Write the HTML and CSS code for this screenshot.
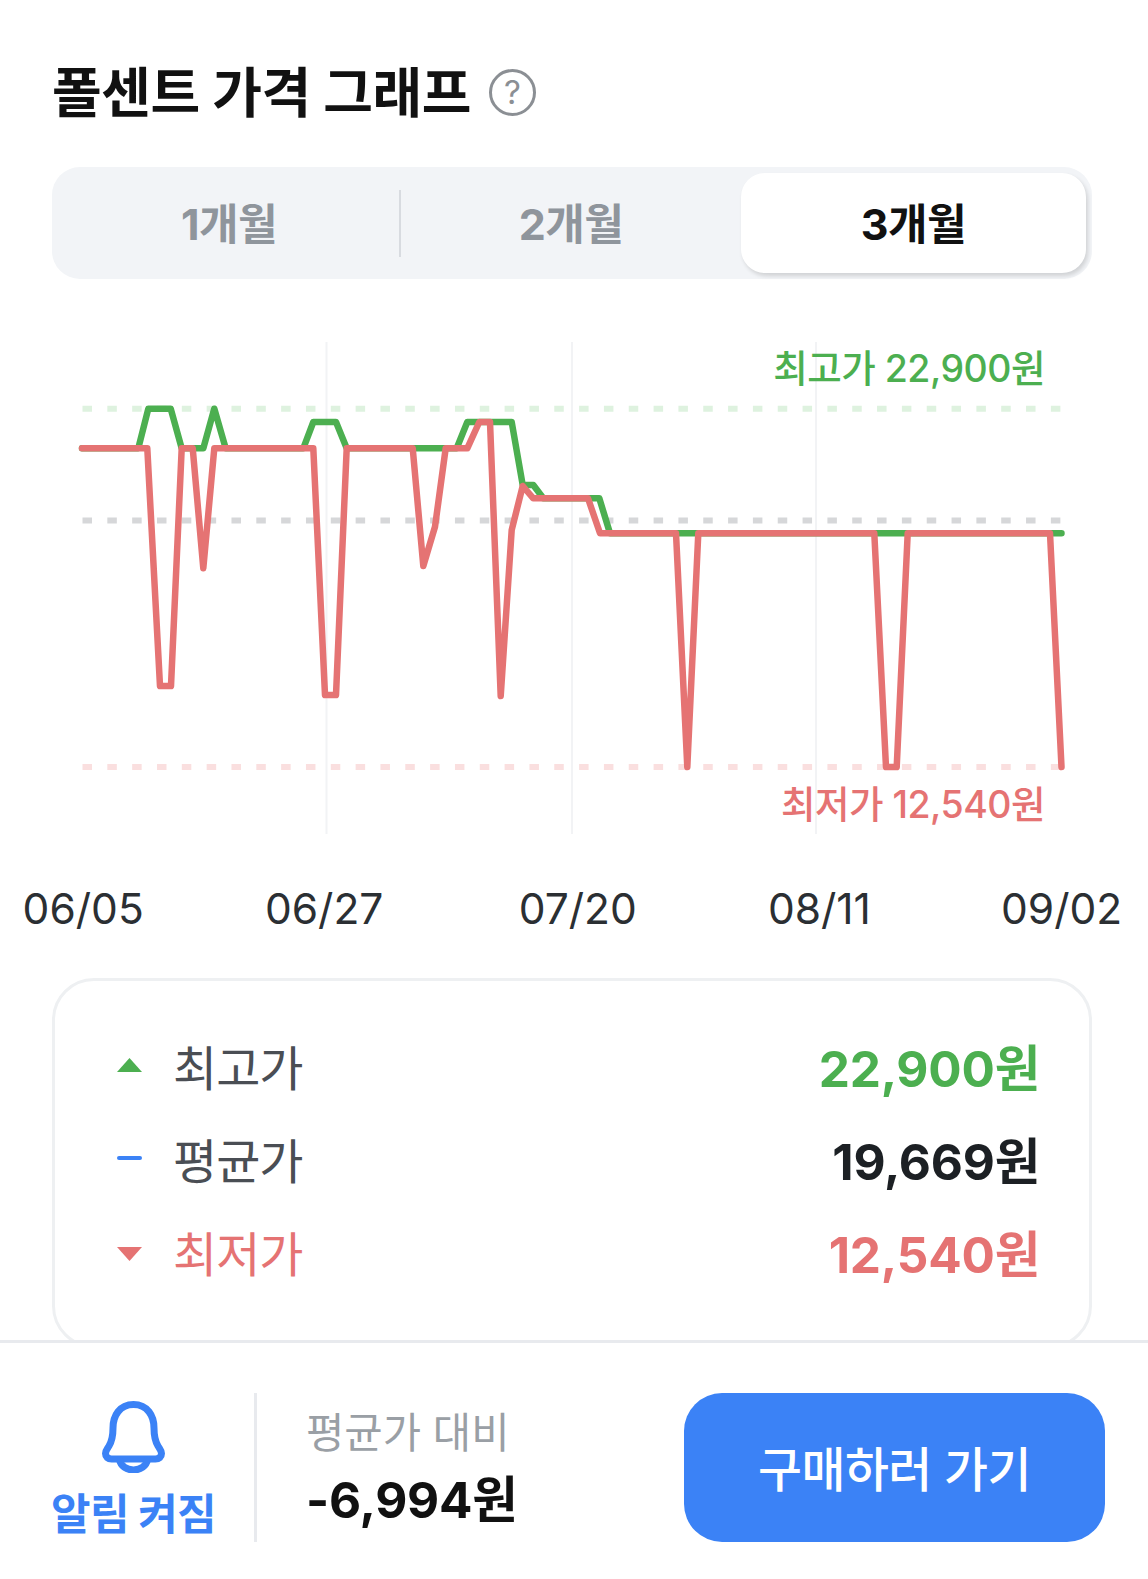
FILE: index.html
```html
<!DOCTYPE html>
<html lang="ko">
<head>
<meta charset="utf-8" />
<meta name="viewport" content="width=device-width, initial-scale=1" />
<title>폴센트 가격 그래프</title>
<link rel="stylesheet" href="styles.css">
</head>
<body>
<div class="page">
<main class="content">
<div class="heading">
<h1>폴센트 가격 그래프</h1>
<span class="help-icon">?</span>
</div>

<div class="tabs">
<div class="tab">1개월</div>
<div class="tab-divider"></div>
<div class="tab">2개월</div>
<div class="tab tab-active">3개월</div>
</div>

<section class="chart">
<svg class="chart-svg" viewBox="0 340 1148 500" width="1148" height="500" aria-hidden="true">
<line class="grid" x1="326.5" y1="342" x2="326.5" y2="834" />
<line class="grid" x1="572" y1="342" x2="572" y2="834" />
<line class="grid" x1="816" y1="342" x2="816" y2="834" />
<line class="dash dash-high" x1="82.5" y1="408.7" x2="1062" y2="408.7" />
<line class="dash dash-mid" x1="82.5" y1="520.5" x2="1062" y2="520.5" />
<line class="dash dash-low" x1="82.5" y1="767" x2="1062" y2="767" />
<polyline class="line line-high" points="82,448.3 138.3,448.3 148.3,408.7 170.7,408.7 181.7,448.3 203.3,448.3 214.3,408.7 225.7,448.3 303.3,448.3 313.3,422 336,422 346.7,448.3 456.7,448.3 467.3,422 511.7,422 522.7,485 533.3,485 543.3,498.3 599.3,498.3 610,533.3 1061.5,533.3" />
<polyline class="line line-low" points="82,448.3 147.3,448.3 160,686 171,686 181.7,448.3 192.7,448.3 203.3,568.3 214.3,448.3 313.3,448.3 325,695 336,695 346.7,448.3 412.7,448.3 423.3,566 435,526.7 445.7,448.3 467.3,448.3 479.3,422 490,422 500.7,696 511.7,530 522.7,486 533.3,498.3 588,498.3 600,533.3 676,533.3 687.3,767 698.3,533.3 874.3,533.3 886,767 896.7,767 907.7,533.3 1050,533.3 1061.5,767" />
</svg>
<span class="chart-label label-high">최고가 22,900원</span>
<span class="chart-label label-low">최저가 12,540원</span>
</section>

<div class="axis">
<span>06/05</span>
<span>06/27</span>
<span>07/20</span>
<span>08/11</span>
<span>09/02</span>
</div>

<section class="summary">
<div class="summary-row row-high">
<span class="marker marker-up"></span>
<span class="summary-name">최고가</span>
<span class="summary-price">22,900원</span>
</div>
<div class="summary-row row-avg">
<span class="marker marker-flat"></span>
<span class="summary-name">평균가</span>
<span class="summary-price">19,669원</span>
</div>
<div class="summary-row row-low">
<span class="marker marker-down"></span>
<span class="summary-name">최저가</span>
<span class="summary-price">12,540원</span>
</div>
</section>
</main>

<footer class="footer">
<div class="alarm">
<svg class="bell" viewBox="0 0 63 72" width="63" height="72" aria-hidden="true">
<path d="M31.5 3.5C17.5 3.5 11 15 11 27c0 8-1 13-4 18-1.500 2.500-3.500 4.500-3.500 7.500 0 3.500 2.500 5.500 6 5.500h44c3.500 0 6-2 6-5.500 0-3-2-5-3.500-7.500-3-5-4-10-4-18C52 15 45.500 3.500 31.500 3.500z" />
<path d="M17.500 58.500c1 6.500 7 10.500 14 10.500s13-4 14-10.500" />
</svg>
<span class="alarm-text">알림 켜짐</span>
</div>
<div class="compare">
<span class="compare-label">평균가 대비</span>
<span class="compare-price">-6,994원</span>
</div>
<button class="buy-button" type="button">구매하러 가기</button>
</footer>
</div>
</body>
</html>
```

FILE: styles.css
```css
:root {
  --green: #4caf50;
  --red: #e57373;
  --blue: #3b82f6;
  --line: #e8eaee;
}
* {
  box-sizing: border-box;
}
body {
  margin: 0;
  background: #fff;
  color: #111;
  font-family: Inter, "Noto Sans CJK KR", sans-serif;
}
.page {
  height: 100vh;
  display: flex;
  flex-direction: column;
  overflow: hidden;
}
.content {
  height: 1340px;
  flex: none;
  overflow: hidden;
  padding-top: 64px;
}
.heading {
  display: flex;
  align-items: center;
  gap: 18px;
  height: 56px;
  margin: 0 52px;
}
h1 {
  margin: 4px 0 0;
  font-size: 54px;
  font-weight: 700;
  letter-spacing: -0.4px;
  line-height: 56px;
  color: #111;
}
.help-icon {
  width: 47px;
  height: 47px;
  border: 3px solid #8b8f94;
  border-radius: 50%;
  display: flex;
  align-items: center;
  justify-content: center;
  font-size: 33px;
  color: #8b8f94;
}
.tabs {
  margin: 47px 56px 0 52px;
  height: 112px;
  padding: 6px 6px 6px 7px;
  background: #f2f4f7;
  border-radius: 28px;
  display: flex;
  align-items: center;
}
.tab {
  flex: 1;
  height: 100%;
  display: flex;
  align-items: center;
  justify-content: center;
  padding-bottom: 5px;
  font-size: 43px;
  font-weight: 700;
  letter-spacing: -0.5px;
  color: #8f959c;
}
.tab-divider {
  width: 2px;
  height: 67px;
  background: #d8dbe0;
}
.tab-active {
  flex: none;
  width: 345px;
  background: #fff;
  border-radius: 24px;
  box-shadow: 2px 3px 4px rgba(0, 0, 0, 0.14);
  color: #111;
}
.chart {
  position: relative;
  height: 500px;
  margin-top: 61px;
}
.chart-svg {
  display: block;
}
.grid {
  stroke: #f2f3f5;
  stroke-width: 2;
}
.dash {
  stroke-width: 6;
  stroke-dasharray: 9.500 15.330;
}
.dash-high {
  stroke: #def2df;
}
.dash-mid {
  stroke: #d6d7d9;
}
.dash-low {
  stroke: #fadfdf;
}
.line {
  fill: none;
  stroke-width: 6.500;
  stroke-linejoin: round;
  stroke-linecap: round;
}
.line-high {
  stroke: var(--green);
}
.line-low {
  stroke: var(--red);
}
.chart-label {
  position: absolute;
  right: 103px;
  font-size: 37.500px;
  font-weight: 500;
  letter-spacing: -0.5px;
  line-height: 44px;
}
.label-high {
  top: 7px;
  color: var(--green);
}
.label-low {
  top: 443px;
  color: var(--red);
}
.axis {
  display: flex;
  gap: 121.600px;
  margin: 45px 0 0 22.600px;
  font-size: 42.500px;
  line-height: 48px;
  color: #2b2f33;
}
.axis span {
  width: 120px;
  flex: none;
  text-align: center;
}
.axis span:nth-child(3) {
  margin-left: 12px;
}
.summary {
  margin: 45px 56px 0 52px;
  height: 370px;
  padding: 56px 49px 0 62px;
  border: 3px solid #eef0f2;
  border-radius: 42px;
  display: flex;
  flex-direction: column;
  gap: 37px;
}
.summary-row {
  display: flex;
  align-items: center;
  height: 56px;
}
.marker {
  width: 25px;
  margin-right: 31px;
  flex: none;
}
.marker-up {
  height: 14px;
  background: var(--green);
  clip-path: polygon(50% 0, 100% 100%, 0 100%);
}
.marker-flat {
  height: 4px;
  background: var(--blue);
  border-radius: 2px;
}
.marker-down {
  height: 14px;
  margin-top: 6px;
  background: var(--red);
  clip-path: polygon(0 0, 100% 0, 50% 100%);
}
.summary-name {
  flex: 1;
  font-size: 48px;
  letter-spacing: -1px;
  color: #4a4e54;
}
.summary-price {
  font-size: 49.500px;
  font-weight: 700;
  letter-spacing: -0.2px;
}
.row-high .summary-price {
  color: var(--green);
}
.row-avg .summary-price {
  color: #1c2024;
}
.row-low .summary-name,
.row-low .summary-price {
  color: var(--red);
}
.footer {
  flex: 1;
  position: relative;
  border-top: 3px solid var(--line);
  background: #fff;
  padding: 50px 43px 37px 0;
  display: flex;
  align-items: stretch;
}
.alarm {
  width: 257px;
  flex: none;
  border-right: 3px solid var(--line);
  display: flex;
  flex-direction: column;
  align-items: center;
  padding: 8px 0 0 13px;
}
.bell {
  display: block;
}
.bell path {
  fill: none;
  stroke: var(--blue);
  stroke-width: 7;
  stroke-linejoin: round;
  stroke-linecap: round;
}
.alarm-text {
  margin-top: 13px;
  font-size: 43px;
  font-weight: 700;
  letter-spacing: -0.7px;
  line-height: 56px;
  color: var(--blue);
}
.compare {
  flex: 1;
  display: flex;
  flex-direction: column;
  padding: 12px 0 0 49px;
}
.compare-label {
  font-size: 41.700px;
  line-height: 56px;
  color: #9a9fa5;
}
.compare-price {
  margin-top: 11px;
  font-size: 49.500px;
  font-weight: 700;
  letter-spacing: -0.2px;
  line-height: 56px;
  color: #111;
}
.buy-button {
  width: 421px;
  flex: none;
  border: none;
  border-radius: 38px;
  background: var(--blue);
  padding-bottom: 4px;
  color: #fff;
  font-family: inherit;
  font-size: 47.800px;
  font-weight: 500;
  letter-spacing: -0.5px;
}
```
